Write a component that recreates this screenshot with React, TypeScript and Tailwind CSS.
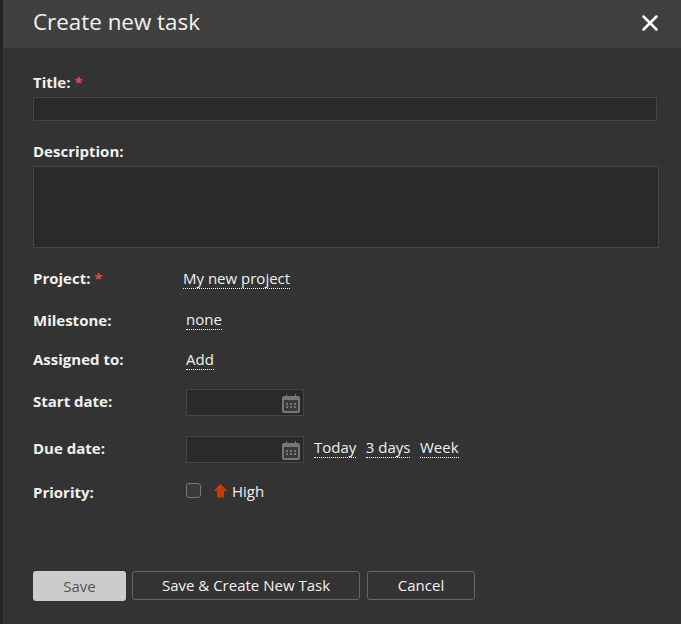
import { X } from 'lucide-react'

function CalendarIcon() {
  return (
    <svg width="18" height="19" viewBox="0 0 18 19" className="absolute right-[3px] top-[4px]">
      <rect x="0" y="2" width="18" height="17" rx="2" fill="#767676" />
      <rect x="4" y="0" width="1" height="3" fill="#767676" />
      <rect x="13" y="0" width="1" height="3" fill="#767676" />
      <rect x="2" y="6" width="14" height="11" fill="#3a3a3a" />
      <path d="M4 9h2v2H4zM8 9h2v2H8zM12 9h2v2h-2zM4 12h2v2H4zM8 12h2v2H8zM12 12h2v2h-2z" fill="#767676" />
    </svg>
  )
}

function DateInput() {
  return (
    <div className="relative w-[118px] h-[27px] bg-[#2a2a2a] border border-[#454545]">
      <CalendarIcon />
    </div>
  )
}

function DottedLink({ children }: { children: string }) {
  return <span className="block border-b border-dotted border-white leading-[19px] h-[20px] text-[15px] text-[#f0f0f0]">{children}</span>
}

function Label({ children, required }: { children: string; required?: boolean }) {
  return (
    <span className="block font-bold text-[15px] leading-[20px] text-[#f0f0f0]">
      {children}
      {required && <span className="text-[#e5484d]"> *</span>}
    </span>
  )
}

export default function App() {
  return (
    <div className="w-[681px] h-[624px] overflow-hidden bg-[#333333] border-l-[3px] border-[#252525] font-['Open_Sans',sans-serif]">
      {/* Header */}
      <div className="h-12 bg-[#404040] flex items-center justify-between pl-[30px] pr-[18px]">
        <h1 className="text-[22.4px] leading-[44px] -mt-1 text-[#f2f2f2]">Create new task</h1>
        <X size={26} strokeWidth={2.3} className="text-white -mt-[3px]" />
      </div>

      {/* Form */}
      <div className="pl-[30px] pt-[24px]">
        <Label required>Title:</Label>
        <div className="mt-[5px] w-[624px] h-[24px] bg-[#2a2a2a] border border-[#454545]" />

        <div className="mt-[20px]">
          <Label>Description:</Label>
        </div>
        <div className="mt-[5px] w-[626px] h-[82px] bg-[#2a2a2a] border border-[#454545]" />

        <div className="mt-[21px] flex items-center h-[20px]">
          <div className="w-[150px] -mt-[2px]"><Label required>Project:</Label></div>
          <DottedLink>My new project</DottedLink>
        </div>

        <div className="mt-[21px] flex items-center h-[20px]">
          <div className="w-[153px]"><Label>Milestone:</Label></div>
          <DottedLink>none</DottedLink>
        </div>

        <div className="mt-[20px] flex items-center h-[20px]">
          <div className="w-[153px] -mt-[2px]"><Label>Assigned to:</Label></div>
          <DottedLink>Add</DottedLink>
        </div>

        <div className="mt-[19px] flex items-center">
          <div className="w-[153px] -mt-[4px]"><Label>Start date:</Label></div>
          <DateInput />
        </div>

        <div className="mt-[20px] flex items-center">
          <div className="w-[153px] -mt-[4px]"><Label>Due date:</Label></div>
          <DateInput />
          <div className="ml-[10px] flex gap-[9.5px] -mt-[3px]">
            <DottedLink>Today</DottedLink>
            <DottedLink>3 days</DottedLink>
            <DottedLink>Week</DottedLink>
          </div>
        </div>

        <div className="mt-[19px] flex items-center h-[20px]">
          <div className="w-[153px]"><Label>Priority:</Label></div>
          <div className="w-[15px] h-[15px] rounded-[3px] border border-[#777777] bg-[#3a3a3a] -mt-[3px]" />
          <svg width="15" height="15" viewBox="0 0 15 15" className="ml-[12px] -mt-[1px]">
            <path d="M7.5 0L14.5 7H11V13.5H4V7H0.5Z" fill="#c83c00" />
          </svg>
          <span className="ml-[4px] text-[15px] leading-[20px] text-[#f0f0f0] -mt-[3px]">High</span>
        </div>

        {/* Buttons */}
        <div className="mt-[69px] flex items-start gap-[6px]">
          <button className="w-[93px] h-[30px] rounded-[3px] bg-[#cccccc] text-[15px] text-[#555555]">Save</button>
          <button className="w-[228px] h-[29px] rounded-[3px] border border-[#666666] text-[15px] text-[#f2f2f2]">Save &amp; Create New Task</button>
          <button className="ml-[1px] w-[108px] h-[29px] rounded-[3px] border border-[#666666] text-[15px] text-[#f2f2f2]">Cancel</button>
        </div>
      </div>
    </div>
  )
}
